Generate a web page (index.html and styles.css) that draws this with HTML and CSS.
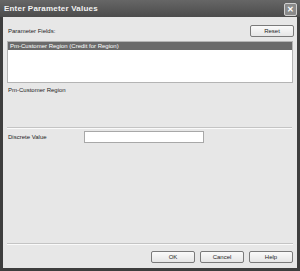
FILE: index.html
```html
<!DOCTYPE html>
<html lang="en">

<head>
    <meta charset="UTF-8">
    <meta name="viewport" content="width=device-width, initial-scale=1.0">
    <title>Enter Parameter Values</title>
    <link rel="stylesheet" href="styles.css">
</head>

<body>
    <div class="window">
        <div class="titlebar">
            <span class="title">Enter Parameter Values</span>
            <span class="close">&#x2715;</span>
        </div>

        <div class="client">
            <div class="top-row">
                <span class="label">Parameter Fields:</span>
                <button class="btn reset">Reset</button>
            </div>

            <div class="listbox">
                <div class="item selected">Pm-Customer Region (Credit for Region)</div>
            </div>

            <div class="field-name">Pm-Customer Region</div>

            <div class="separator top-sep"></div>

            <div class="value-row">
                <span class="label">Discrete Value</span>
                <input class="value-input" type="text">
            </div>

            <div class="spacer"></div>

            <div class="separator"></div>

            <div class="buttons">
                <button class="btn">OK</button>
                <button class="btn">Cancel</button>
                <button class="btn">Help</button>
            </div>
        </div>
    </div>
</body>

</html>
```

FILE: styles.css
```css
body {
    margin: 0;
    font-family: "Liberation Sans", Arial, sans-serif;
    background: #ffffff;
}

/* Marco exterior oscuro */
.window {
    width: 300px;
    height: 271px;
    box-sizing: border-box;
    padding: 0 3px 3px 3px;
    background: #3e3e3e;
    display: flex;
    flex-direction: column;
}

.titlebar {
    height: 17px;
    margin: 0 -3px;
    padding: 0 3px 0 4px;
    display: flex;
    align-items: center;
    justify-content: space-between;
    background: linear-gradient(#666666, #4c4c4c);
}

.title {
    color: #f2f2f2;
    font-size: 8px;
    font-weight: bold;
    letter-spacing: 0.2px;
}

.close {
    width: 11px;
    height: 11px;
    margin-top: 2px;
    border: 1px solid #d0d0d0;
    border-radius: 2px;
    background: #8a8a8a;
    color: #ffffff;
    font-size: 8px;
    font-weight: bold;
    line-height: 11px;
    text-align: center;
}

.client {
    flex: 1;
    background: #e7e7e7;
    padding: 8px 4px 5px 4px;
    display: flex;
    flex-direction: column;
}

.label {
    font-size: 6px;
    color: #1e1e1e;
    padding-left: 1px;
}

.top-row {
    height: 12px;
    display: flex;
    align-items: center;
    justify-content: space-between;
}

.btn {
    width: 44px;
    height: 12px;
    padding: 0;
    border: 1px solid #7a7a7a;
    border-radius: 2px;
    background: linear-gradient(#fafafa, #e6e6e6);
    font-family: "Liberation Sans", Arial, sans-serif;
    font-size: 6px;
    color: #1e1e1e;
}

.reset {
    margin-right: -1px;
}

.listbox {
    margin-top: 4px;
    height: 42px;
    box-sizing: border-box;
    border: 1px solid #b4b4b4;
    background: #ffffff;
}

.item {
    height: 8px;
    padding-left: 2px;
    font-size: 6px;
    line-height: 8px;
    color: #ffffff;
}

.selected {
    background: #6a6a6a;
}

.field-name {
    margin-top: 3px;
    font-size: 6px;
    line-height: 9px;
    color: #1e1e1e;
    padding-left: 1px;
}

.separator {
    height: 1px;
    border-top: 1px solid #c4c4c4;
    background: #fafafa;
}

.top-sep {
    margin-top: 32px;
    margin-right: 1px;
}

.value-row {
    margin-top: 2px;
    height: 12px;
    display: flex;
    align-items: center;
}

.value-row .label {
    width: 76px;
}

.value-input {
    width: 120px;
    height: 12px;
    box-sizing: border-box;
    border: 1px solid #a8a8a8;
    background: #ffffff;
    padding: 0;
}

.spacer {
    flex: 1;
}

.buttons {
    margin-top: 6px;
    display: flex;
    justify-content: flex-end;
    gap: 5px;
}
```
